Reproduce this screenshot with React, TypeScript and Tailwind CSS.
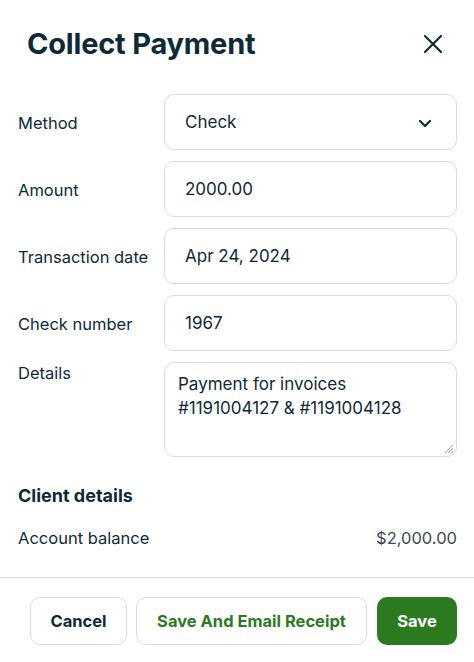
import React from "react";

const ink = "text-[#0e2a36]";

function Field({ label, value }: { label: string; value: string }) {
  return (
    <div className="grid grid-cols-[146px_1fr] items-center">
      <span className={`pt-[2px] text-[16.5px] ${ink}`}>{label}</span>
      <div className="flex h-[56px] items-center rounded-[10px] border border-[#d6dde0] px-[20px] pt-[2px] text-[17px] text-[#0e2a36]">
        {value}
      </div>
    </div>
  );
}

export default function App() {
  return (
    <div className="flex h-[662px] w-[474px] flex-col bg-white font-['Inter',sans-serif]">
      <div className="flex h-[88px] items-center justify-between pl-[27px] pr-[31px]">
        <h1 className={`text-[29px] font-bold tracking-[-0.2px] ${ink}`}>Collect Payment</h1>
        <svg width="20" height="20" viewBox="0 0 20 20" className="text-[#0e2a36]">
          <path d="M2 2L18 18M18 2L2 18" stroke="currentColor" strokeWidth="2.2" strokeLinecap="round" />
        </svg>
      </div>

      <div className="mt-[6px] flex flex-col gap-[11px] pl-[18px] pr-[17px]">
        <div className="grid grid-cols-[146px_1fr] items-center">
          <span className={`pt-[2px] text-[16.5px] ${ink}`}>Method</span>
          <div className="flex h-[56px] items-center justify-between rounded-[10px] border border-[#d6dde0] pl-[20px] pr-[24px] pt-[2px] text-[17px] text-[#0e2a36]">
            Check
            <svg width="14" height="9" viewBox="0 0 14 9" className="text-[#0e2a36]">
              <path d="M2 2L7 7L12 2" fill="none" stroke="currentColor" strokeWidth="2.2" strokeLinecap="round" strokeLinejoin="round" />
            </svg>
          </div>
        </div>
        <Field label="Amount" value="2000.00" />
        <Field label="Transaction date" value="Apr 24, 2024" />
        <Field label="Check number" value="1967" />
        <div className="grid grid-cols-[146px_1fr] items-start">
          <span className={`text-[16.5px] leading-[22px] ${ink}`}>Details</span>
          <div className="relative h-[95px] rounded-[10px] border border-[#d6dde0] px-[13px] pt-[9px] text-[17px] leading-[24px] text-[#0e2a36]">
            Payment for invoices
            <br />
            #1191004127 &amp; #1191004128
            <svg width="10" height="10" viewBox="0 0 10 10" className="absolute bottom-[2px] right-[2px] text-[#9aa4a8]">
              <path d="M9 1L1 9M9 4L4 9M9 7L7 9" stroke="currentColor" strokeWidth="0.9" />
            </svg>
          </div>
        </div>
      </div>

      <div className="mt-[27px] pl-[18px] pr-[17px]">
        <div className={`text-[18px] font-bold leading-[24px] ${ink}`}>Client details</div>
        <div className="mt-[18px] flex items-center justify-between text-[16.5px] leading-[24px]">
          <span className="text-[#0e2a36]">Account balance</span>
          <span className="text-[#3b4950]">$2,000.00</span>
        </div>
      </div>

      <div className="mt-[27px] border-t border-[#d9dee0]" />

      <div className="flex justify-end gap-[9px] pr-[17px] pt-[19px]">
        <button className="h-[48px] w-[97px] rounded-[10px] border border-[#d6dde0] text-[16.5px] font-bold text-[#0e2a36]">
          Cancel
        </button>
        <button className="h-[48px] w-[231px] rounded-[10px] border border-[#d6dde0] text-[16.5px] font-bold text-[#2c7a1f]">
          Save And Email Receipt
        </button>
        <button className="ml-px h-[48px] w-[80px] rounded-[10px] bg-[#2c7a1f] text-[16.5px] font-bold text-white">
          Save
        </button>
      </div>
    </div>
  );
}
